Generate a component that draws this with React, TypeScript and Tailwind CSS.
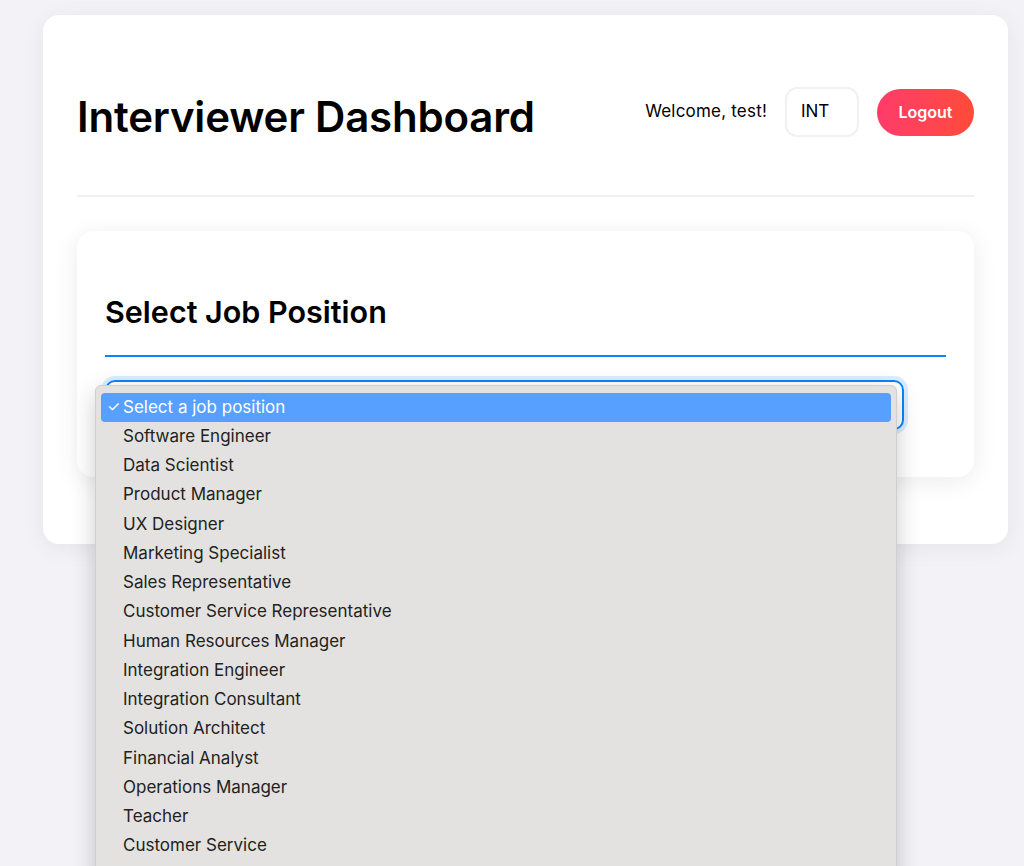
import React from "react";

const items = [
  "Software Engineer",
  "Data Scientist",
  "Product Manager",
  "UX Designer",
  "Marketing Specialist",
  "Sales Representative",
  "Customer Service Representative",
  "Human Resources Manager",
  "Integration Engineer",
  "Integration Consultant",
  "Solution Architect",
  "Financial Analyst",
  "Operations Manager",
  "Teacher",
  "Customer Service",
];

export default function App() {
  return (
    <div
      className="relative h-[866px] w-[1024px] overflow-hidden bg-[#f2f2f7] text-black"
      style={{ fontFamily: "Inter, 'Noto Sans', sans-serif" }}
    >
      <div className="pl-[43px] pr-[16px] pt-[15px]">
        <div className="rounded-[16px] bg-white px-[34px] pb-[67px] pt-[34px] shadow-[0_4px_24px_rgba(0,0,0,0.06)]">
          <div className="flex items-center justify-between pb-[57px] pt-[37px] border-b-2 border-[#f0f0f5]">
            <h1 className="text-[42px] font-semibold leading-none tracking-[-0.2px] mt-[10px]">
              Interviewer Dashboard
            </h1>
            <div className="flex items-center">
              <span className="text-[17px] tracking-[0.2px]">Welcome, test!</span>
              <div className="ml-[18px] flex h-[50px] w-[74px] items-center rounded-[12px] border-2 border-[#f0f0f5] pl-[14px] text-[17px]">
                INT
              </div>
              <button className="ml-[18px] h-[47px] w-[97px] rounded-full bg-gradient-to-r from-[#ff3b6a] to-[#ff4b37] text-[16px] font-semibold text-white">
                Logout
              </button>
            </div>
          </div>
          <div className="mt-[34px] rounded-[16px] bg-white px-[28px] pb-[47px] pt-[66px] shadow-[0_4px_24px_rgba(0,0,0,0.08)]">
            <h2 className="text-[30.5px] font-semibold leading-none">Select Job Position</h2>
            <div className="mt-[27px] h-[2px] bg-[#0a84ff]" />
            <div className="mt-[23px] h-[50px] w-[799px] rounded-[10px] border-2 border-[#0a84ff] shadow-[0_0_0_4px_rgba(10,132,255,0.15)]" />
          </div>
        </div>
      </div>

      <div className="absolute left-[95px] top-[385px] w-[802px] h-[500px] rounded-[6px] border border-[#cfcfcd] bg-[#e3e2e0] px-[5px] pt-[7px] shadow-[0_8px_24px_rgba(0,0,0,0.2)]">
        <div className="flex h-[29px] items-center rounded-[4px] bg-[#58a0ff] text-[17px] text-white">
          <span className="w-[22px] pl-[6px] text-[15px]">✓</span>
          <span>Select a job position</span>
        </div>
        {items.map((t) => (
          <div key={t} className="flex h-[29.25px] items-center pl-[22px] text-[17px] text-[#222]">
            {t}
          </div>
        ))}
      </div>
    </div>
  );
}
